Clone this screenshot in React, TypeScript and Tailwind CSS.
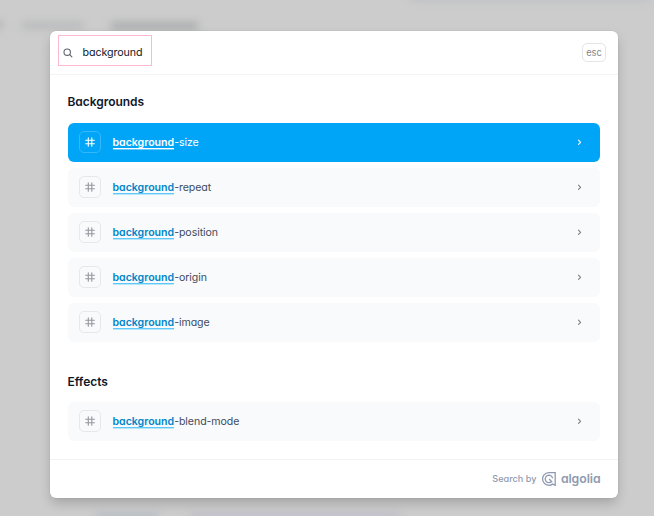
const sections = [
  { title: 'Backgrounds', items: ['-size', '-repeat', '-position', '-origin', '-image'] },
  { title: 'Effects', items: ['-blend-mode'] },
]

function HashIcon({ active }: { active: boolean }) {
  return (
    <span
      className={`flex size-[22px] shrink-0 items-center justify-center rounded-[5px] border ${
        active ? 'border-[#35b8fa] text-white' : 'border-[#e6e8eb] text-[#94979d]'
      }`}
    >
      <svg width="10" height="10" viewBox="0 0 10 10" fill="none" stroke="currentColor" strokeWidth="1.1" strokeLinecap="round">
        <path d="M3.3 0.7V9.3M6.8 0.7V9.3M0.7 3.3H9.4M0.7 6.8H9.4" />
      </svg>
    </span>
  )
}

function Row({ suffix, active }: { suffix: string; active: boolean }) {
  return (
    <li
      className={`flex h-[39px] items-center rounded-[6px] pr-[18px] pl-[11.5px] text-[10.6px] ${
        active ? 'bg-[#00a5f7] text-white' : 'bg-[#f8fafc] text-[#414b5e]'
      }`}
    >
      <HashIcon active={active} />
      <span className="ml-[11.5px] flex items-center leading-[13px]">
        <span
          className={`h-[12px] font-semibold tracking-[-0.02px] shadow-[0_1.4px_0_0] ${
            active ? 'text-white shadow-white' : 'text-[#0284c7] shadow-[#5cc9fa]'
          }`}
        >
          background
        </span>
        <span className="h-[12px] tracking-[-0.07px]">{suffix}</span>
      </span>
      <svg className={`ml-auto ${active ? 'text-white' : 'text-[#7c8088]'}`} width="5" height="7" viewBox="0 0 5 7" fill="none" stroke="currentColor" strokeWidth="1.1" strokeLinecap="round" strokeLinejoin="round">
        <path d="M1.5 1.2 3.6 3.3 1.5 5.4" />
      </svg>
    </li>
  )
}

function Backdrop() {
  return (
    <div className="absolute inset-0">
      <div className="absolute top-[23px] left-[22px] h-[5px] w-[61px] bg-[#b0b2b4] blur-[4px]" />
      <div className="absolute top-[22px] left-[-8px] h-[6px] w-[10px] bg-[#aaa] blur-[4px]" />
      <div className="absolute top-[23px] left-[111px] h-[6px] w-[87px] bg-[#a0a2a4] blur-[4px]" />
      <div className="absolute top-[-6px] left-[410px] h-[6px] w-[240px] bg-[#b8bcc3] blur-[4px]" />
      <div className="absolute top-[515px] left-[96px] h-[6px] w-[62px] bg-[#a9b5c1] blur-[4px]" />
      <div className="absolute top-[515px] left-[190px] h-[6px] w-[210px] bg-[#bab4c8] blur-[4px]" />
    </div>
  )
}

export default function App() {
  return (
    <div className="relative flex h-[516px] w-[654px] overflow-hidden bg-[#cccccc] pt-[31px] pl-[49.5px] font-[Inter,sans-serif] [font-feature-settings:'cv11']">
      <Backdrop />
      <main className="relative flex h-[467px] w-[568.5px] flex-col rounded-[6px] bg-white shadow-[0_0_0_0.5px_rgba(0,0,0,0.06),0_6px_12px_-1px_rgba(0,0,0,0.2)]">
        <header className="flex h-[43.5px] shrink-0 items-start border-b border-[#f3f4f6] pt-[4px] pr-[12px] pl-[8.5px]">
          <div className="flex h-[31px] w-[94px] shrink-0 items-center border border-[#ffb8d0] pt-[4px] pl-[4px]">
            <svg width="10" height="10" viewBox="0 0 10 10" fill="none" stroke="#5f646d" strokeWidth="1.1" strokeLinecap="round">
              <circle cx="4.2" cy="4.2" r="3.2" />
              <path d="m6.7 6.7 2.2 2.2" />
            </svg>
            <span className="ml-[9.5px] text-[10.7px] leading-[14px] tracking-[-0.09px] text-[#0f172a]">background</span>
          </div>
          <kbd className="mt-[8px] ml-auto flex h-[19px] w-[24px] items-center justify-center rounded-[5px] border border-[#e4e5e7] pt-px font-[Inter,sans-serif] text-[9.3px] leading-[12px] text-[#85878a]">esc</kbd>
        </header>
        <div className="flex grow flex-col px-[18px]">
          {sections.map((section, s) => (
            <section key={section.title} className={s === 0 ? 'pt-[18.9px]' : 'pt-[30.8px]'}>
              <h2 className="mb-[11.2px] h-[18px] text-[12px] leading-[18px] font-semibold tracking-[-0.05px] text-[#0f172a]">{section.title}</h2>
              <ul className="flex flex-col gap-[6.1px]">
                {section.items.map((item, i) => (
                  <Row key={item} suffix={item} active={s === 0 && i === 0} />
                ))}
              </ul>
            </section>
          ))}
        </div>
        <footer className="flex h-[39px] shrink-0 items-center justify-end border-t border-[#f1f2f4] pr-[17.5px] text-[#8f9ab0]">
          <span className="text-[9.1px] font-medium">Search by</span>
          <svg className="ml-[5.5px]" width="14" height="14" viewBox="0 0 14 14" fill="none" stroke="currentColor" strokeWidth="1.3">
            <path d="M13.2 .7H7A6.3 6.3 0 1 0 10.6 12.1L13.2 13.3Z" />
            <path d="M10.6 6.4A3.7 3.7 0 1 0 9.3 9.8M7.2 7 10.2 10.2" />
          </svg>
          <span className="ml-[5px] text-[12.3px] leading-[16px] font-semibold tracking-[-0.08px]">algolia</span>
        </footer>
      </main>
    </div>
  )
}
